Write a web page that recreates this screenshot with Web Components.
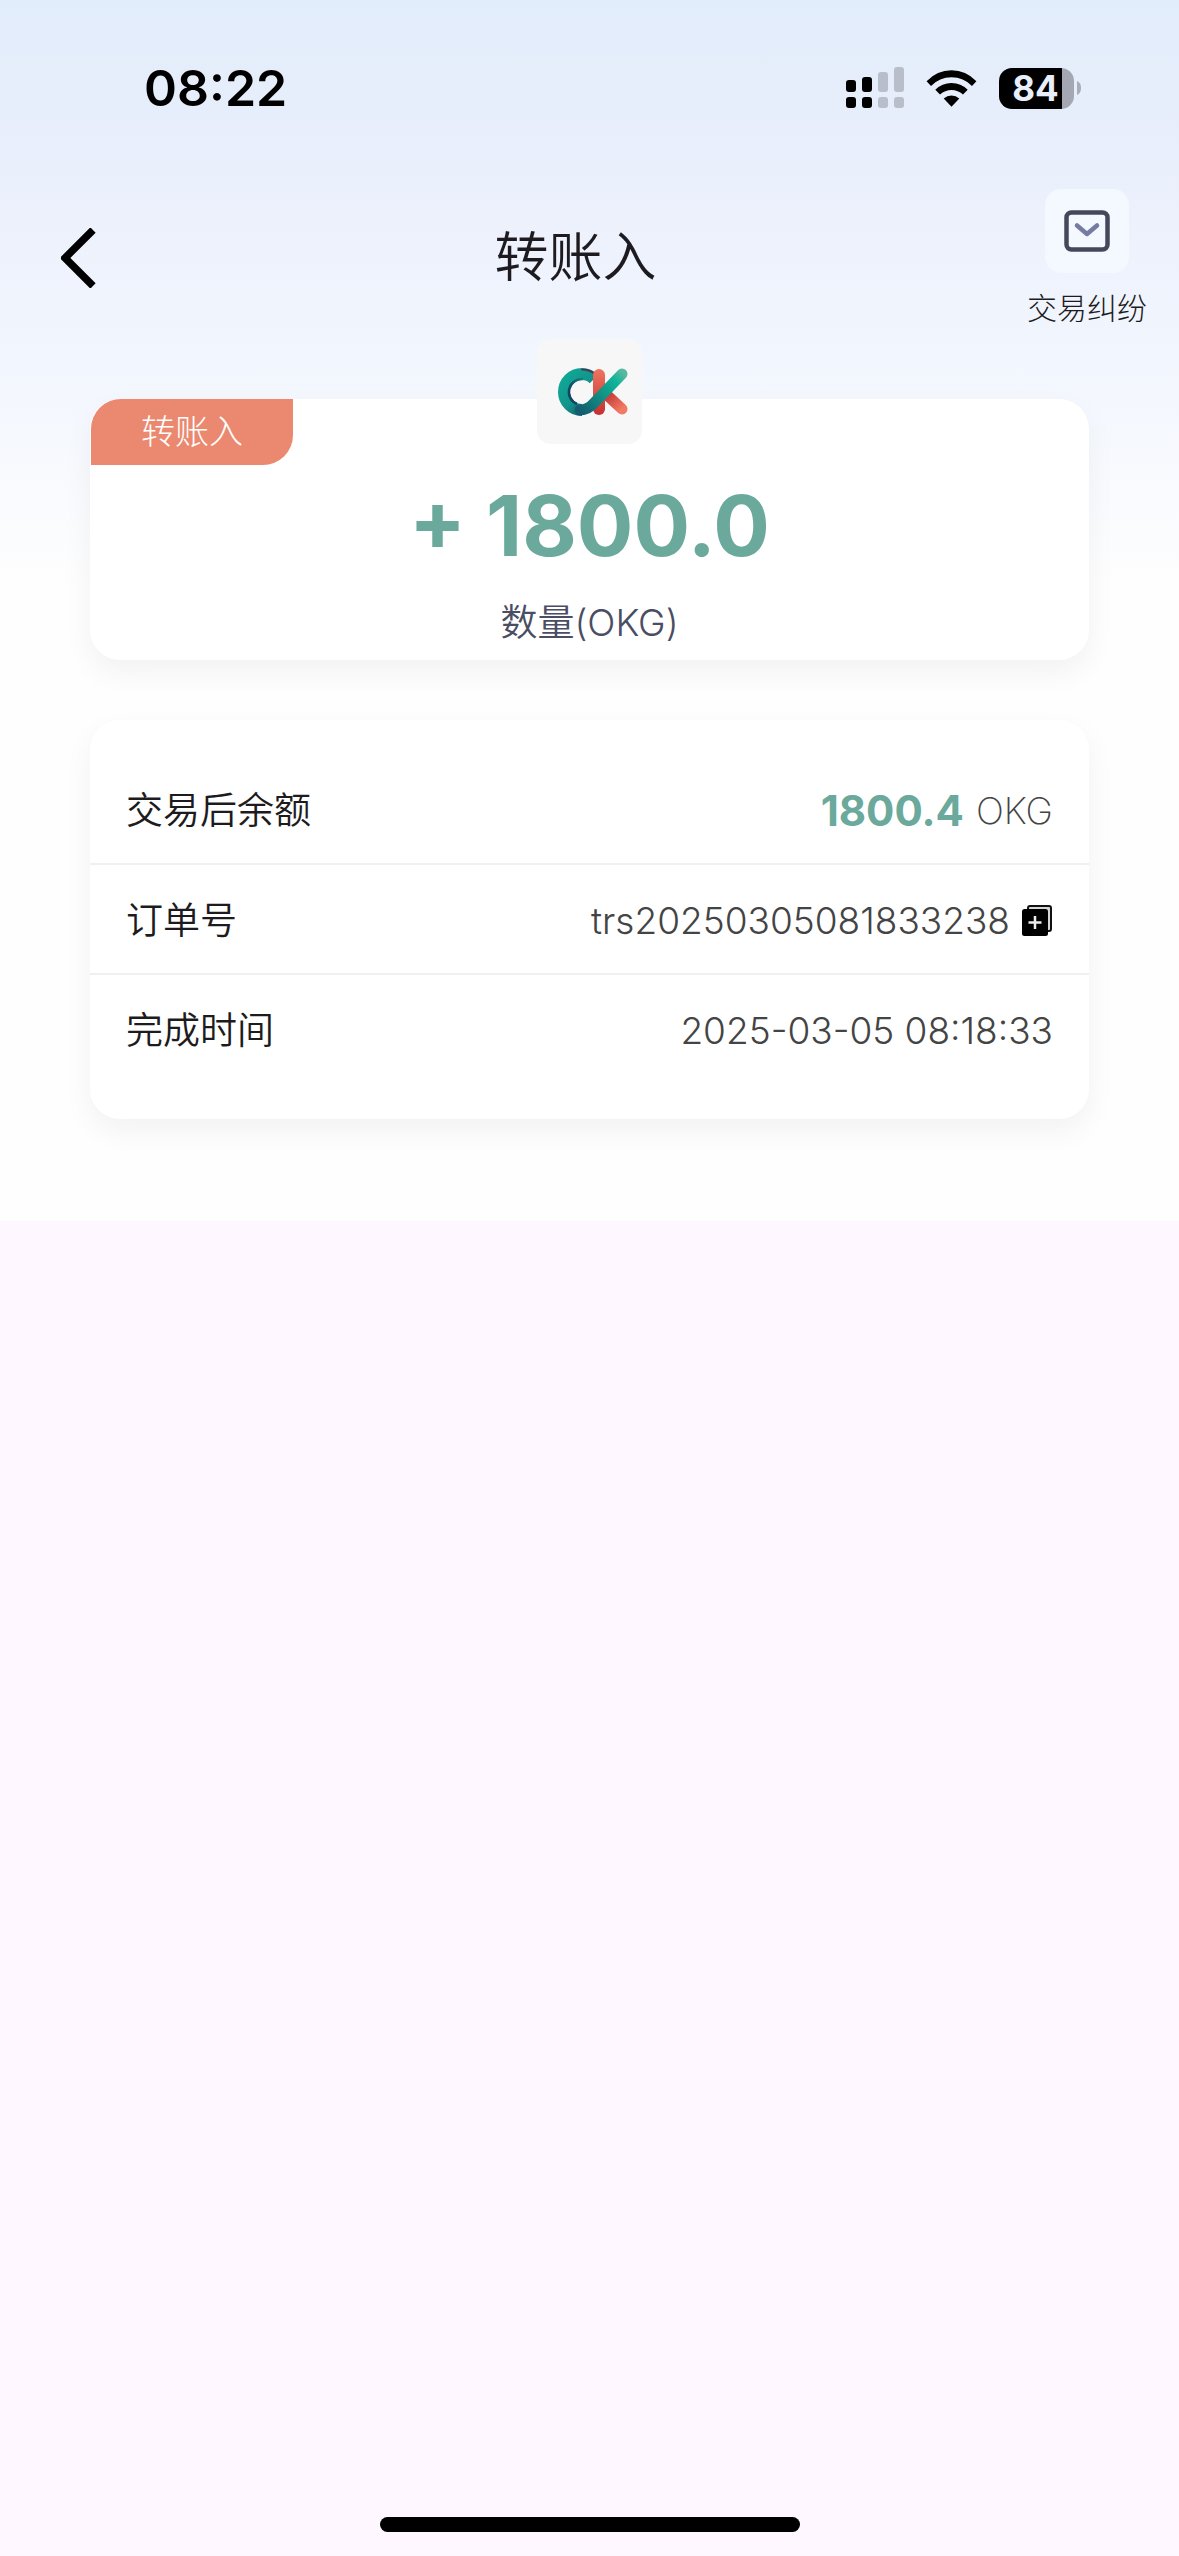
<!DOCTYPE html>
<html lang="zh-CN">
<head>
<meta charset="utf-8">
<meta name="viewport" content="width=device-width">
<title>转账入</title>
<style>
html, body { margin: 0; }
body {
  min-height: 100vh;
  background: #fef7ff;
  color: #1d1b20;
  font-family: Inter, "Noto Sans CJK SC", sans-serif;
  font-size: 36px;
  font-weight: 350;
}
</style>
</head>
<body>
<transfer-page></transfer-page>
<script>
const define = (name, html) => {
  const template = document.createElement('template');
  template.innerHTML = html;
  customElements.define(name, class extends HTMLElement {
    constructor() {
      super();
      this.attachShadow({ mode: 'open' }).append(template.content.cloneNode(true));
    }
  });
};

define('status-bar', `
<style>
:host { display: flex; justify-content: space-between; align-items: center; height: 176px; padding: 0 98px 0 144px; box-sizing: border-box; color: #000; }
time { font-size: 50px; font-weight: 600; line-height: 60px; }
.icons { display: flex; align-items: center; gap: 22px; }
svg { display: block; }
.battery { display: flex; align-items: center; gap: 3px; }
.level { width: 75px; height: 41px; box-sizing: border-box; padding-right: 2px; line-height: 41px; border-radius: 13px; text-align: center; font-size: 35px; font-weight: 700; color: #e8effb; background: linear-gradient(90deg, #000 63px, #a3a8b3 63px); }
</style>
<time>08:22</time>
<div class="icons">
  <svg width="58" height="42" viewBox="0 0 58 42" aria-hidden="true">
    <g fill="#000"><rect y="13" width="10" height="12" rx="3"/><rect x="16" y="10" width="10" height="15" rx="3"/><rect y="30" width="10" height="11" rx="3"/><rect x="16" y="30" width="10" height="11" rx="3"/></g>
    <g fill="#b8bfca"><rect x="32" y="5" width="10" height="20" rx="3"/><rect x="48" width="10" height="25" rx="3"/><rect x="32" y="30" width="10" height="11" rx="3"/><rect x="48" y="30" width="10" height="11" rx="3"/></g>
  </svg>
  <svg width="51" height="38" viewBox="0 0 51 38" aria-hidden="true">
    <path d="M0.6 12.2Q11 1.2 25.5 1.2T50.4 12.2L46 17Q37.5 8.3 25.5 8.3T5 17Z"/>
    <path d="M9.3 20.8Q16 14 25.5 14T41.7 20.8L37 25.6Q32 21 25.5 21T14 25.6Z"/>
    <path d="M17.7 29.4Q21 26.5 25.5 26.5T33.3 29.4L25.5 37.8Z"/>
  </svg>
  <div class="battery">
    <div class="level">84</div>
    <svg width="4" height="14" viewBox="0 0 4 14" aria-hidden="true"><path d="M0 0C5.400 2 5.400 12 0 14Z" fill="#a9aeb9"/></svg>
  </div>
</div>`);

define('nav-header', `
<style>
:host { display: flex; align-items: center; padding: 13px 32px 12px 0; }
button { border: 0; padding: 0; background: none; color: inherit; font: inherit; display: flex; cursor: pointer; }
.back { width: 124px; padding-left: 61px; box-sizing: border-box; }
h1 { flex: 1; margin: 0; text-align: center; font-size: 54px; line-height: 72px; font-weight: inherit; }
.dispute { flex-direction: column; align-items: center; gap: 17px; font-size: 30px; line-height: 36px; font-weight: 300; }
.box { display: flex; align-items: center; justify-content: center; width: 84px; height: 84px; border-radius: 16px; background: #f4f8ff; }
</style>
<button class="back" aria-label="返回"><svg width="35" height="60" viewBox="0 0 35 60"><path d="M32 2L4 30L32 58" fill="none" stroke="#000" stroke-width="7.500"/></svg></button>
<h1><slot></slot></h1>
<button class="dispute">
  <span class="box"><svg width="46" height="42" viewBox="0 0 46 42" fill="none" stroke-linecap="round" stroke-linejoin="round"><rect x="2.500" y="2.500" width="41" height="37" rx="5" stroke="#45485a" stroke-width="4.500"/><path d="M13 15.500L23 24L33 15.500" stroke="#757ba3" stroke-width="4.500"/></svg></span>
  <slot name="action"></slot>
</button>`);

define('surface-card', `
<style>
:host { display: block; position: relative; border-radius: 30px; background: #fff; box-shadow: 0 12px 30px rgba(0, 0, 0, .05); }
</style>
<slot></slot>`);

define('token-logo', `
<style>
:host { display: flex; align-items: center; justify-content: center; width: 105px; height: 105px; padding-left: 8px; box-sizing: border-box; border-radius: 14px; background: #f7f7f7; }
</style>
<svg width="70" height="48" viewBox="0 0 70 48" fill="none" stroke-linecap="round" role="img" aria-label="OKG">
  <defs>
    <linearGradient id="ring" x1="0" y1="0" x2="1" y2="1"><stop offset="0" stop-color="#10a896"/><stop offset=".5" stop-color="#11958c"/><stop offset="1" stop-color="#164a61"/></linearGradient>
    <linearGradient id="dark" x1="0" y1="1" x2="1" y2="0"><stop offset="0" stop-color="#123c58"/><stop offset=".5" stop-color="#15506a"/><stop offset="1" stop-color="#148476"/></linearGradient>
    <linearGradient id="bar" x1="0" y1="0" x2="0" y2="1"><stop offset="0" stop-color="#ee7560"/><stop offset="1" stop-color="#c7302f"/></linearGradient>
    <linearGradient id="leg" x1="0" y1="0" x2="1" y2="1"><stop offset="0" stop-color="#c83c3c"/><stop offset="1" stop-color="#f17a62"/></linearGradient>
    <linearGradient id="arm" gradientUnits="userSpaceOnUse" x1="24" y1="44" x2="66" y2="6"><stop offset="0" stop-color="#145d70"/><stop offset=".45" stop-color="#109083"/><stop offset=".8" stop-color="#0fb49b"/><stop offset="1" stop-color="#58b8a0"/></linearGradient>
  </defs>
  <path d="M50 28L64 41" stroke="url(#leg)" stroke-width="11"/>
  <path d="M36 11Q31 6 24 6A18 18 0 0 0 24 42" stroke="url(#ring)" stroke-width="12" stroke-linecap="butt"/>
  <path d="M25 11A13 13 0 0 0 19 36" stroke="url(#dark)" stroke-width="2.500" stroke-linecap="butt"/>
  <path d="M24 1.500Q31 1.500 36 5.500" stroke="#4c3855" stroke-width="2"/>
  <rect x="35" y="1" width="12" height="46" rx="6" fill="url(#bar)"/>
  <path d="M22 42Q30 42 36 35L64 6" stroke="url(#arm)" stroke-width="11" stroke-linejoin="round"/>
</svg>`);

define('amount-card', `
<style>
:host { display: block; }
surface-card { padding-bottom: 13px; text-align: center; }
.tag { width: 202px; height: 66px; margin-left: 1px; border-radius: 30px 0; background: #eb8970; color: #fff; font-size: 34px; line-height: 66px; font-weight: 300; }
token-logo { position: absolute; left: 50%; top: -60px; margin-left: -53px; }
.amount { margin-top: 11px; font-size: 84px; line-height: 100px; font-weight: 700; color: #6aa99b; }
.unit { margin-top: 23px; font-size: 37px; line-height: 48px; color: #4a4d63; }
</style>
<surface-card>
  <div class="tag"><slot name="tag"></slot></div>
  <token-logo></token-logo>
  <div class="amount"><slot name="amount"></slot></div>
  <div class="unit"><slot name="unit"></slot></div>
</surface-card>`);

define('detail-row', `
<style>
:host { display: flex; align-items: center; justify-content: space-between; box-sizing: border-box; min-height: 110px; padding: 3px 36px 0; border-bottom: 2px solid #f0f0f0; }
:host(:last-child) { border-bottom-color: transparent; }
.value { display: flex; align-items: center; gap: 12px; color: #444; }
.label, .value { font-size: 37px; line-height: 48px; }
::slotted(strong) { font-size: 42px; font-weight: 700; color: #6aa99b; }
::slotted(small) { font-size: 37px; font-weight: 250; }
</style>
<span class="label"><slot name="label"></slot></span>
<span class="value"><slot></slot></span>`);

define('copy-button', `
<style>
:host { display: flex; }
button { display: flex; border: 0; padding: 0; background: none; cursor: pointer; }
</style>
<button aria-label="复制订单号"><svg width="31" height="31" viewBox="0 0 31 31"><rect x="6" y="1" width="23" height="25" rx="2" fill="#d6d6d6" stroke="#111" stroke-width="2"/><rect x="0" y="4" width="26" height="27" rx="2.500"/><path d="M13 11V24M6.500 17.500H19.500" stroke="#eee" stroke-width="2.500"/></svg></button>`);

define('home-indicator', `
<style>
:host { display: block; width: 420px; height: 15px; margin: auto auto 24px; border-radius: 8px; background: #000; }
</style>`);

define('transfer-page', `
<style>
:host { display: flex; flex-direction: column; min-height: 100vh; }
.top { padding-bottom: 102px; background: linear-gradient(180deg, #e2edfb 0, #e8eefb 130px, #f2f6fe 360px, #fefefe 590px); }
main { display: flex; flex-direction: column; gap: 60px; padding: 61px 90px 0; }
.rows { padding: 35px 0 34px; }
</style>
<div class="top">
  <status-bar></status-bar>
  <nav-header>转账入<span slot="action">交易纠纷</span></nav-header>
  <main>
    <amount-card><span slot="tag">转账入</span><span slot="amount">+ 1800.0</span><span slot="unit">数量(OKG)</span></amount-card>
    <surface-card class="rows">
      <detail-row><span slot="label">交易后余额</span><strong>1800.4</strong><small>OKG</small></detail-row>
      <detail-row><span slot="label">订单号</span><span>trs20250305081833238</span><copy-button></copy-button></detail-row>
      <detail-row><span slot="label">完成时间</span><span>2025-03-05 08:18:33</span></detail-row>
    </surface-card>
  </main>
</div>
<home-indicator></home-indicator>`);
</script>
</body>
</html>
